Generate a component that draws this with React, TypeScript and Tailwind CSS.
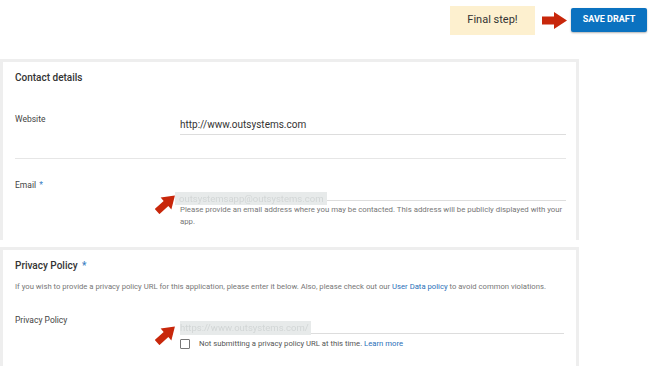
import React from "react";

function RightArrow() {
  return (
    <svg width="25" height="17" viewBox="0 0 25 17" className="block">
      <polygon points="0,4.5 12,4.5 12,0 25,8.5 12,17 12,12.5 0,12.5" fill="#c8270b" />
    </svg>
  );
}

function DiagArrow() {
  return (
    <svg width="22" height="21" viewBox="0 0 22 21" className="block">
      <g transform="rotate(-42 11 10.5)">
        <polygon points="-1,7 11,7 11,2.5 23,10.5 11,18.5 11,14 -1,14" fill="#c8270b" />
      </g>
    </svg>
  );
}

export default function App() {
  return (
    <div className="relative w-[662px] h-[366px] overflow-hidden bg-white font-['Roboto',sans-serif] text-[#333]">
      {/* top bar */}
      <div className="flex h-[59px] items-start justify-end pr-[15px]">
        <div className="mt-[6px] flex h-[29px] w-[85px] items-center justify-center bg-[#fdf0cf] text-[11px] text-[#333]">
          Final step!
        </div>
        <div className="ml-[7px] mr-[4px] mt-[12px]">
          <RightArrow />
        </div>
        <div className="mt-[8px] flex h-[24px] w-[76px] items-center justify-center rounded-[2px] bg-[#0b72c0] text-[9px] font-bold text-white shadow-[0_1px_2px_rgba(0,0,0,0.3)]">
          SAVE DRAFT
        </div>
      </div>

      {/* card 1 */}
      <div className="h-[181px] w-[579px] border-[3px] border-b-0 border-[#eeeeee]">
        <div className="pl-[12px] pr-[10px]">
          <div className="pt-[8px] text-[10px] font-medium leading-[16px] text-[#333]">Contact details</div>
          <div className="mt-[26px] flex">
            <div className="w-[165px] text-[8.5px] leading-[14px] text-[#444]">Website</div>
            <div className="mt-[5px] flex-1 border-b border-[#dddddd] pb-[1px] text-[10px] leading-[16px] text-[#333]">
              http://www.outsystems.com
            </div>
          </div>
          <div className="mt-[23px] h-px bg-[#e6e6e6]" />
          <div className="mt-[19px] flex">
            <div className="w-[165px] text-[8.5px] leading-[14px] text-[#444]">
              Email <span className="ml-[1px] text-[#3b7fc4]">*</span>
            </div>
            <div className="flex-1">
              <div className="mt-[5px] h-[18px] border-b border-[#dddddd] pt-[2px]">
                <span className="-ml-[5px] inline-block bg-[#e7eaea] px-[4px] text-[9.5px] leading-[13px] text-[#d2d6d6] blur-[0.6px]">
                  outsystemsapp@outsystems.com
                </span>
              </div>
              <div className="mt-[3px] text-[7.8px] leading-[12px] text-[#777]">
                Please provide an email address where you may be contacted. This address will be publicly displayed with your app.
              </div>
            </div>
          </div>
        </div>
      </div>

      {/* card 2 */}
      <div className="mt-[7px] h-[200px] w-[579px] border-[3px] border-b-0 border-[#eeeeee]">
        <div className="pl-[12px] pr-[12px]">
          <div className="pt-[8px] text-[10px] font-medium leading-[16px] text-[#333]">
            Privacy Policy <span className="ml-[2px] text-[#3b7fc4]">*</span>
          </div>
          <div className="mt-[7px] text-[7.7px] leading-[12px] text-[#777]">
            If you wish to provide a privacy policy URL for this application, please enter it below. Also, please check out our{" "}
            <span className="text-[#2a6fb8]">User Data policy</span> to avoid common violations.
          </div>
          <div className="mt-[20px] flex">
            <div className="w-[165px] text-[8.5px] leading-[14px] text-[#444]">Privacy Policy</div>
            <div className="flex-1">
              <div className="h-[21px] border-b border-[#dddddd] pt-[1px]">
                <span className="inline-block bg-[#e7eaea] pr-[2px] text-[9.5px] leading-[14px] text-[#d2d6d6] blur-[0.6px]">
                  https://www.outsystems.com/
                </span>
              </div>
              <div className="mt-[4px] flex items-center">
                <div className="h-[10px] w-[10px] rounded-[1px] border-[1.5px] border-[#777]" />
                <div className="ml-[9px] text-[7.7px] leading-[11px] text-[#555]">
                  Not submitting a privacy policy URL at this time. <span className="text-[#2a6fb8]">Learn more</span>
                </div>
              </div>
            </div>
          </div>
        </div>
      </div>

      {/* overlay arrows */}
      <div className="absolute left-[155px] top-[193px]">
        <DiagArrow />
      </div>
      <div className="absolute left-[155px] top-[324px]">
        <DiagArrow />
      </div>
    </div>
  );
}
